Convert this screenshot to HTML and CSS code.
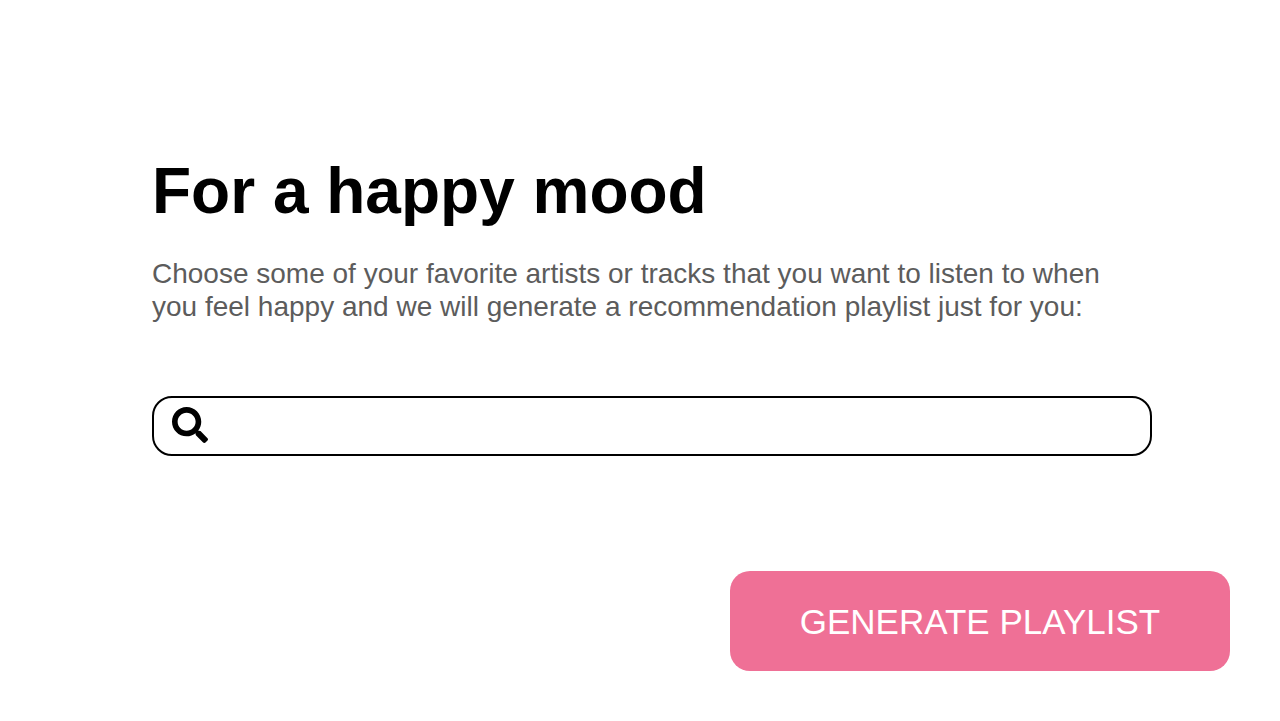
FILE: index.html
```html
<!DOCTYPE html>
<html lang="en">
<head>
<meta charset="utf-8">
<meta name="viewport" content="width=device-width, initial-scale=1">
<title>For a happy mood</title>
<link rel="stylesheet" href="styles.css">
</head>
<body>
<form class="page">
  <main class="content">
    <h1 class="title">For a happy mood</h1>
    <p class="intro">Choose some of your favorite artists or tracks that you want to listen to when you feel happy and we will generate a recommendation playlist just for you:</p>
    <label class="search">
      <svg class="search-icon" viewBox="0 0 512 512" aria-hidden="true"><path d="M505 442.700L405.300 343c-4.500-4.500-10.600-7-17-7H372c27.600-35.300 44-79.700 44-128C416 93.100 322.900 0 208 0S0 93.100 0 208s93.100 208 208 208c48.300 0 92.700-16.400 128-44v16.300c0 6.400 2.500 12.500 7 17l99.700 99.700c9.400 9.400 24.600 9.400 33.900 0l28.300-28.300c9.400-9.400 9.400-24.600.1-34zM208 336c-70.700 0-128-57.200-128-128 0-70.700 57.200-128 128-128 70.700 0 128 57.200 128 128 0 70.700-57.200 128-128 128z"/></svg>
      <input class="search-input" type="search" aria-label="Search artists or tracks">
    </label>
  </main>
  <footer class="actions">
    <button class="generate" type="button">GENERATE PLAYLIST</button>
  </footer>
</form>
</body>
</html>
```
FILE: styles.css
```css
* {
  box-sizing: border-box;
}

body {
  margin: 0;
  background: #fff;
  color: #000;
  font-family: "Liberation Sans", Arial, sans-serif;
}

.page {
  display: flex;
  flex-direction: column;
  justify-content: space-between;
  min-height: 100vh;
  padding: 153px 50px 50px;
}

.content {
  margin: 0 78px 0 102px;
}

.title {
  margin: 0;
  font-size: 64px;
  line-height: 76px;
}

.intro {
  margin: 28px 0 0;
  color: #5c5c5c;
  font-size: 28px;
  line-height: 33px;
}

.search {
  display: flex;
  align-items: center;
  gap: 16px;
  height: 60px;
  margin-top: 73px;
  padding: 0 18px 2px;
  border: 2px solid #000;
  border-radius: 20px;
}

.search-icon {
  flex: none;
  width: 36px;
  height: 36px;
}

.search-input {
  flex: 1;
  min-width: 0;
  height: 100%;
  padding: 0;
  border: 0;
  outline: 0;
  background: transparent;
  font: inherit;
  font-size: 28px;
}

.actions {
  display: flex;
  justify-content: flex-end;
}

.generate {
  width: 500px;
  max-width: 100%;
  height: 100px;
  padding: 2px 0 0;
  border: 0;
  border-radius: 20px;
  background: #ef7096;
  color: #fff;
  font: inherit;
  font-size: 35px;
}
```
